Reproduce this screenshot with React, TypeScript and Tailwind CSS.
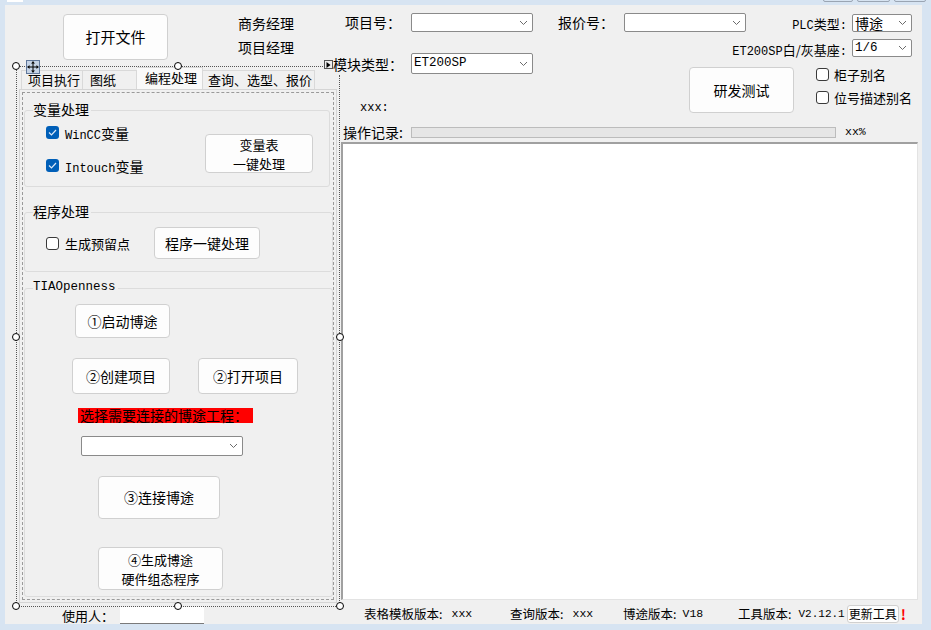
import React from 'react';

const CJK = "font-['Noto_Sans_CJK_SC',sans-serif]";
const MONO = "font-['Liberation_Mono','Noto_Sans_CJK_SC',monospace]";

// small chevron used inside the combo boxes
const Chevron: React.FC = () => (
  <svg width="9" height="6" viewBox="0 0 9 6" className="shrink-0">
    <path d="M1 1 L4.5 4.5 L8 1" fill="none" stroke="#6b6b6b" strokeWidth="1" />
  </svg>
);

const Combo: React.FC<{ className: string; text?: string; mono?: boolean }> = ({ className, text, mono }) => (
  <div
    className={`flex items-center justify-between bg-white border border-[#8a8a8a] rounded-[2px] pl-[2px] pr-[4px] ${className}`}
  >
    <span className={`${mono ? MONO + ' text-[12.5px]' : CJK + ' text-[14px]'} leading-none text-black`}>{text}</span>
    <Chevron />
  </div>
);

const Btn: React.FC<{ className: string; children: React.ReactNode }> = ({ className, children }) => (
  <div
    className={`flex items-center justify-center text-center bg-[#fdfdfd] border border-[#d0d0d0] rounded-[4px] text-black ${CJK} ${className}`}
  >
    {children}
  </div>
);

const Check: React.FC<{ checked?: boolean }> = ({ checked }) =>
  checked ? (
    <div className="w-[13px] h-[13px] rounded-[3px] bg-[#005fb8] flex items-center justify-center shrink-0">
      <svg width="9" height="7" viewBox="0 0 9 7">
        <path d="M1 3.5 L3.5 6 L8 1" fill="none" stroke="#dbe8f7" strokeWidth="1.2" />
      </svg>
    </div>
  ) : (
    <div className="w-[13px] h-[13px] rounded-[3px] bg-white border border-[#3a3a3a] shrink-0" />
  );

// latin part in the mono face, chinese part in the CJK face
const Mixed: React.FC<{ latin: string; cjk: string; tail?: string; size?: string; cjkSize?: string }> = ({
  latin,
  cjk,
  tail,
  size = 'text-[12px]',
  cjkSize = 'text-[13px]',
}) => (
  <span className="whitespace-nowrap">
    <span className={`${MONO} ${size}`}>{latin}</span>
    <span className={`${CJK} ${cjkSize}`}>{cjk}</span>
    {tail && <span className={`${MONO} ${size}`}>{tail}</span>}
  </span>
);

const Group: React.FC<{ label: string; mono?: boolean; className: string; children: React.ReactNode }> = ({
  label,
  mono,
  className,
  children,
}) => (
  <div className={`relative border border-[#dcdcdc] rounded-[3px] ${className}`}>
    <span
      className={`absolute left-[8px] -top-[10px] bg-[#f0f0f0] pr-[2px] leading-[16px] ${
        mono ? MONO + ' text-[12.5px]' : CJK + ' text-[14px]'
      }`}
    >
      {label}
    </span>
    {children}
  </div>
);

const Handle: React.FC<{ className: string }> = ({ className }) => (
  <div className={`absolute w-[8px] h-[8px] rounded-full border border-black bg-white z-20 ${className}`} />
);

const App: React.FC = () => {
  return (
    <div className={`relative w-[931px] h-[630px] bg-[#d7e4f2] overflow-hidden text-black ${CJK}`}>
      {/* window chrome bits along the top edge */}
      <div className="absolute left-[7px] top-0 w-[16px] h-[2px] bg-white" />
      <div className="absolute left-[823px] top-[-3px] flex gap-[4px]">
        <div className="w-[30px] h-[5px] border border-[#9aa5b3] rounded-[2px]" />
        <div className="w-[33px] h-[5px] border border-[#9aa5b3] rounded-[2px]" />
        <div className="w-[32px] h-[5px] border border-[#9aa5b3] rounded-[2px]" />
      </div>

      <div className="absolute left-[5px] top-[5px] w-[917px] h-[619px] bg-[#f0f0f0] flex">
        {/* left column: designer view */}
        <div className="w-[335px] flex flex-col">
          <div className="flex pl-[58px] pt-[9px] h-[55px]">
            <Btn className="w-[105px] h-[46px] text-[15px]">打开文件</Btn>
            <div className="ml-[70px] -mt-[3px] flex flex-col text-[14px] leading-[24px]">
              <span>商务经理</span>
              <span>项目经理</span>
            </div>
          </div>

          <div className="relative ml-[11px] mt-[6px] w-[324px] h-[541px]">
            {/* selection frame */}
            <div className="absolute left-0 top-0 w-[309px] border-t border-dotted border-[#555]" />
            <div className="absolute left-0 top-0 h-full border-l border-dotted border-[#555]" />
            <div className="absolute left-[323px] top-[9px] bottom-0 border-l border-dotted border-[#555]" />
            <div className="absolute left-0 bottom-0 w-[324px] border-b border-dotted border-[#555]" />
            <Handle className="left-[-4px] top-[-4px]" />
            <Handle className="left-[158px] top-[-4px]" />
            <Handle className="left-[-4px] top-[267px]" />
            <Handle className="left-[320px] top-[267px]" />
            <Handle className="left-[-4px] top-[536px]" />
            <Handle className="left-[158px] top-[536px]" />
            <Handle className="left-[320px] top-[536px]" />
            <div className="absolute left-[10px] top-[-6px] w-[14px] h-[14px] bg-[#c5d3e6] border border-[#60779a] z-20 flex items-center justify-center">
              <svg width="12" height="12" viewBox="0 0 12 12">
                <path d="M6 0.5 V11.5 M0.5 6 H11.5" stroke="#000" strokeWidth="1" />
                <path d="M6 0.5 L4 2.5 H8 Z M6 11.5 L4 9.5 H8 Z M0.5 6 L2.5 4 V8 Z M11.5 6 L9.5 4 V8 Z" fill="#000" />
              </svg>
            </div>
            <div className="absolute left-[308px] top-[-6px] w-[9px] h-[9px] bg-[#eeeeee] border border-[#555] z-20 flex items-center justify-center">
              <svg width="5" height="6" viewBox="0 0 5 6">
                <path d="M0.5 0 L4.5 3 L0.5 6 Z" fill="#000" />
              </svg>
            </div>

            {/* tab control */}
            <div className="pl-[3px] pt-[1px]">
              <div className="flex items-end h-[22px] pl-[2px] text-[13px]">
                <div className="w-[62px] h-[19px] border border-b-0 border-[#d9d9d9] pl-[6px] leading-[18px]">项目执行</div>
                <div className="w-[54px] h-[19px] border border-b-0 border-l-0 border-[#d9d9d9] pl-[7px] leading-[18px]">图纸</div>
                <div className="w-[66px] h-[22px] border border-b-0 border-l-0 border-[#d9d9d9] bg-[#f9f9f9] pl-[8px] leading-[20px]">编程处理</div>
                <div className="w-[112px] h-[19px] border border-b-0 border-l-0 border-[#d9d9d9] pl-[5px] leading-[18px]">查询、选型、报价</div>
              </div>
              <div className="w-[318px] h-[514px] border border-[#d5d5d5] p-[2px]">
                <div className="w-full h-full border border-dashed border-[#9a9a9a] flex flex-col">
                  <Group label="变量处理" className="ml-[1px] mt-[17px] w-[306px] h-[77px] flex">
                    <div className="w-[180px] pl-[21px] pt-[15px] flex flex-col gap-[20px]">
                      <div className="flex items-center h-[13px] gap-[6px]">
                        <Check checked />
                        <Mixed latin="WinCC" cjk="变量" size="text-[12px]" cjkSize="text-[14px]" />
                      </div>
                      <div className="flex items-center h-[13px] gap-[6px]">
                        <Check checked />
                        <Mixed latin="Intouch" cjk="变量" size="text-[12px]" cjkSize="text-[14px]" />
                      </div>
                    </div>
                    <Btn className="mt-[23px] w-[108px] h-[39px] text-[13px] leading-[19px] flex-col">
                      <span>变量表</span>
                      <span>一键处理</span>
                    </Btn>
                  </Group>

                  <Group label="程序处理" className="ml-[1px] mt-[25px] w-[309px] h-[60px] flex items-start">
                    <div className="w-[129px] pl-[21px] mt-[24px] flex items-center h-[13px] gap-[6px] text-[13px]">
                      <Check />
                      <span>生成预留点</span>
                    </div>
                    <Btn className="mt-[14px] w-[106px] h-[32px] text-[14px]">程序一键处理</Btn>
                  </Group>

                  <Group label="TIAOpenness" mono className="ml-[1px] mt-[16px] w-[309px] h-[309px] flex flex-col items-start">
                    <Btn className="ml-[50px] mt-[15px] w-[95px] h-[34px] text-[14px]">①启动博途</Btn>
                    <div className="ml-[47px] mt-[20px] flex">
                      <Btn className="w-[98px] h-[36px] text-[14px]">②创建项目</Btn>
                      <Btn className="ml-[28px] w-[100px] h-[36px] text-[14px]">②打开项目</Btn>
                    </div>
                    <div className="ml-[53px] mt-[14px] w-[175px] h-[15px] bg-[#ff0000] text-[14px] leading-[15px] pl-[2px] whitespace-nowrap">
                      选择需要连接的博途工程：
                    </div>
                    <Combo className="ml-[56px] mt-[13px] w-[162px] h-[20px]" />
                    <Btn className="ml-[73px] mt-[20px] w-[122px] h-[43px] text-[14px]">③连接博途</Btn>
                    <Btn className="ml-[73px] mt-[28px] w-[125px] h-[43px] text-[13px] leading-[19px] flex-col">
                      <span>④生成博途</span>
                      <span>硬件组态程序</span>
                    </Btn>
                  </Group>
                </div>
              </div>
            </div>
          </div>

          <div className="flex items-center h-[17px] pl-[57px] text-[13px]">
            <span className="w-[58px]">使用人：</span>
            <div className="w-[84px] h-[17px] bg-white border-b border-[#7a7a7a]" />
          </div>
        </div>

        {/* right column */}
        <div className="w-[582px] flex flex-col">
          <div className="mt-[8px] h-[19px] flex items-center pr-[10px]">
            <span className="w-[71px] pl-[5px] text-[14px]">项目号：</span>
            <Combo className="w-[122px] h-[19px]" />
            <span className="ml-[25px] w-[66px] text-[14px]">报价号：</span>
            <Combo className="w-[122px] h-[19px]" />
            <span className="flex-1 text-right pr-[5px]">
              <Mixed latin="PLC" cjk="类型" tail=":" size="text-[12px]" cjkSize="text-[13px]" />
            </span>
            <Combo className="w-[60px] h-[18px]" text="博途" />
          </div>

          <div className="h-[92px] flex">
            <div className="w-[340px] flex flex-col">
              <div className="mt-[21px] h-[21px] flex items-center">
                <span className="-ml-[7px] w-[78px] text-[14px] leading-none relative z-10">模块类型：</span>
                <Combo className="w-[122px] h-[21px]" text="ET200SP" mono />
              </div>
              <span className={`mt-[27px] pl-[20px] ${MONO} text-[12px] leading-[14px]`}>xxx:</span>
            </div>
            <div className="flex-1 flex flex-col">
              <div className="mt-[7px] h-[18px] flex items-center justify-end pr-[10px]">
                <span className="pr-[5px]">
                  <Mixed latin="ET200SP" cjk="白/灰基座" tail=":" size="text-[12px]" cjkSize="text-[13px]" />
                </span>
                <Combo className="w-[60px] h-[18px]" text="1/6" mono />
              </div>
              <div className="mt-[10px] flex items-start">
                <Btn className="ml-[9px] w-[105px] h-[46px] text-[14px]">研发测试</Btn>
                <div className="ml-[22px] mt-[1px] flex flex-col gap-[10px] text-[13px]">
                  <div className="flex items-center h-[13px] gap-[5px]">
                    <Check />
                    <span>柜子别名</span>
                  </div>
                  <div className="flex items-center h-[13px] gap-[5px]">
                    <Check />
                    <span>位号描述别名</span>
                  </div>
                </div>
              </div>
            </div>
          </div>

          <div className="h-[16px] flex items-center">
            <span className="w-[71px] pl-[3px] text-[14px]">操作记录:</span>
            <div className="w-[425px] h-[11px] bg-[#e6e6e6] border border-[#bcbcbc]" />
            <span className={`ml-[9px] ${MONO} text-[11.5px]`}>xx%</span>
          </div>

          <div className="mt-[2px] ml-[1px] w-[577px] h-[458px] bg-white border-t-2 border-l-2 border-[#a0a0a0] border-r border-b border-r-[#e3e3e3] border-b-[#e3e3e3]" />

          <div className="mt-[4px] h-[20px] flex items-center pl-[24px] text-[12.5px]">
            <div className="w-[146px] flex items-center">
              <span>表格模板版本:</span>
              <span className={`ml-[9px] ${MONO} text-[11.5px]`}>xxx</span>
            </div>
            <div className="w-[113px] flex items-center">
              <span>查询版本:</span>
              <span className={`ml-[9px] ${MONO} text-[11.5px]`}>xxx</span>
            </div>
            <div className="w-[115px] flex items-center">
              <span>博途版本:</span>
              <span className={`ml-[6px] ${MONO} text-[11.5px]`}>V18</span>
            </div>
            <div className="flex items-center">
              <span>工具版本:</span>
              <span className={`ml-[7px] ${MONO} text-[11px]`}>V2.12.1</span>
              <div className="ml-[2px] h-[18px] px-[1px] bg-[#fdfdfd] border border-[#d0d0d0] rounded-[3px] text-[12px] leading-[16px]">
                更新工具
              </div>
              <span className="ml-[2px] text-[#ff0000] font-bold text-[14px]">!</span>
            </div>
          </div>
        </div>
      </div>
    </div>
  );
};

export default App;
